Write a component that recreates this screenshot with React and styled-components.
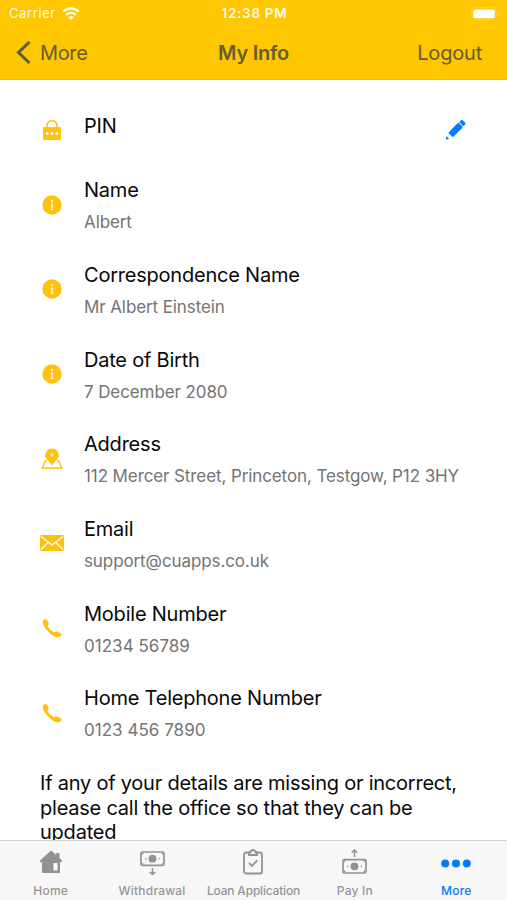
import React from "react";
import styled, { createGlobalStyle } from "styled-components";

const GlobalStyle = createGlobalStyle`
  * {
    box-sizing: border-box;
  }
  body {
    margin: 0;
    background: #fff;
    font-family: Inter, "Liberation Sans", sans-serif;
  }
`;

const Screen = styled.div`
  display: flex;
  flex-direction: column;
  width: 507px;
  height: 900px;
  overflow: hidden;
  background: #fff;
`;

const Header = styled.div`
  flex: none;
  height: 79.5px;
  background: #ffc602;
  border-bottom: 1px solid #e9b91c;
`;

const StatusBar = styled.div`
  display: grid;
  grid-template-columns: 1fr auto 1fr;
  align-items: center;
  height: 27px;
  padding: 0 7px 0 9px;
  color: #fffbe8;
  font-size: 13px;
  line-height: 27px;
`;

const Carrier = styled.div`
  display: flex;
  align-items: center;
  gap: 6px;
  letter-spacing: 0.6px;
`;

const Time = styled.div`
  font-size: 13.5px;
  font-weight: 600;
  letter-spacing: 0.7px;
`;

const BatteryHolder = styled.div`
  display: flex;
  justify-content: flex-end;
`;

const NavBar = styled.div`
  display: grid;
  grid-template-columns: 1fr auto 1fr;
  align-items: center;
  height: 51px;
  padding: 0 25px 0 16px;
  color: #655d30;
  font-size: 20px;
`;

const Back = styled.div`
  display: flex;
  align-items: center;
  gap: 9px;
  letter-spacing: -0.35px;
`;

const NavTitle = styled.div`
  padding-left: 9px;
  font-weight: 600;
  letter-spacing: -0.25px;
`;

const Logout = styled.div`
  text-align: right;
  letter-spacing: -0.2px;
`;

const Content = styled.div`
  flex: 1;
  min-height: 0;
  overflow: hidden;
  padding-top: 18.5px;
`;

const Row = styled.div`
  display: flex;
  align-items: center;
  height: ${(props) => (props.$short ? "64.8px" : "84.7px")};
  padding: 0 40px;
`;

const IconHolder = styled.div`
  display: flex;
  justify-content: center;
  width: 24px;
  margin-right: 20px;
  padding-bottom: 1px;
`;

const Texts = styled.div`
  flex: 1;
  display: flex;
  flex-direction: column;
  gap: 10px;
  padding-bottom: ${(props) => (props.$short ? "8px" : "0")};
  white-space: nowrap;
`;

const Title = styled.div`
  color: #080808;
  font-size: 20px;
  line-height: 24px;
  letter-spacing: -0.22px;
`;

const Value = styled.div`
  color: #747474;
  font-size: 17px;
  line-height: 20px;
  letter-spacing: ${(props) => props.$spacing ?? -0.1}px;
`;

const Note = styled.div`
  padding: 15.7px 40px 0;
  color: #080808;
  font-size: 20px;
  line-height: 24.5px;
  letter-spacing: -0.23px;
  white-space: nowrap;
`;

const TabBar = styled.div`
  flex: none;
  display: grid;
  grid-template-columns: repeat(5, 1fr);
  height: 60.5px;
  border-top: 1px solid #cfcfcf;
  background: #f7f7f7;
`;

const Tab = styled.div`
  display: flex;
  flex-direction: column;
  align-items: center;
  min-width: 0;
  padding-top: 8px;
  color: ${(props) => (props.$active ? "#057aff" : "#959595")};
  font-size: 12px;
  font-weight: 500;
  line-height: 16px;
  letter-spacing: ${(props) => props.$spacing ?? 0.2}px;
  white-space: nowrap;

  svg {
    margin-bottom: 8px;
  }
`;

const WifiIcon = () => (
  <svg width="18" height="14" viewBox="0 0 18 14" fill="none" stroke="#fffbe8">
    <path d="M1.2 4.700a11.2 11.2 0 0 1 15.6 0" strokeWidth="2.5" />
    <path d="M4 7.800a7.2 7.2 0 0 1 10 0" strokeWidth="2.3" />
    <path d="M9 13 6.2 10.200a4.1 4.1 0 0 1 5.6 0z" fill="#fffbe8" stroke="none" />
  </svg>
);

const BatteryIcon = () => (
  <svg width="29" height="14" viewBox="0 0 29 14">
    <rect x="0.8" y="0.8" width="24.4" height="12" rx="3.5" fill="none" stroke="#ffd54a" />
    <rect x="2.2" y="2.4" width="21.6" height="8.8" rx="1.8" fill="#fff" />
    <path d="M27 5v4c2-.8 2-3.2 0-4z" fill="#ffd54a" />
  </svg>
);

const BackIcon = () => (
  <svg width="15" height="24" viewBox="0 0 15 24" fill="none" stroke="#625b31" strokeWidth="3">
    <path d="M13.5 1 2.5 11.5l11 10.5" />
  </svg>
);

const LockIcon = () => (
  <svg width="20" height="22" viewBox="0 0 20 22">
    <path d="M5 9V6.5a5 5 0 0 1 10 0V9" fill="none" stroke="#ffc20e" strokeWidth="1.6" />
    <rect x="1" y="8" width="18" height="13" rx="1" fill="#ffc20e" />
    <g fill="#fff">
      <circle cx="5.2" cy="14.5" r="1.5" />
      <circle cx="10" cy="14.5" r="1.5" />
      <circle cx="14.8" cy="14.5" r="1.5" />
    </g>
  </svg>
);

const InfoIcon = () => (
  <svg width="20" height="20" viewBox="0 0 20 20">
    <circle cx="10" cy="10" r="9.7" fill="#ffc20e" />
    <g fill="#fff3c9">
      <circle cx="10" cy="6" r="1.2" />
      <path d="M8.5 8.6h2.400v5.300h.9v1H8.400v-1h.9V9.600h-.8z" />
    </g>
  </svg>
);

const AddressIcon = () => (
  <svg width="22" height="22" viewBox="0 0 22 22">
    <path d="M6 13H4.200L1.300 20h19.400L17.800 13H16" fill="none" stroke="#ffc20e" strokeWidth="1.5" />
    <path
      d="M11 17.5C9.500 14.5 4.300 11 4.300 7.200a6.700 6.700 0 0 1 13.400 0C17.700 11 12.500 14.500 11 17.500z"
      fill="#ffc20e"
    />
    <circle cx="11" cy="7" r="1.800" fill="#fff5d2" />
  </svg>
);

const MailIcon = () => (
  <svg width="24" height="16" viewBox="0 0 24 16">
    <rect width="24" height="16" rx="1.5" fill="#ffc20e" />
    <path
      d="M1 1.5 12 10 23 1.5M1 14.5 8 7.5M23 14.5 16 7.5"
      fill="none"
      stroke="#fff"
      strokeWidth="1.3"
    />
  </svg>
);

const PhoneIcon = () => (
  <svg width="20" height="20" viewBox="0 0 20 20">
    <path
      d="M1.200 2.200C2.500.6 4.200.4 5.100 2.100L6.500 4.700C7.200 6.100 6.400 6.900 5.300 7.700 7 10.400 9.100 12.600 12.300 14.500c.8-1 1.700-1.500 2.900-.9l3.300 1.500c1.500.7 1.300 2.200.1 3.200C16.600 20 13.200 19.200 10 16.900 5.400 13.600 1.700 8.700.9 5.100.7 4 .7 3 1.200 2.200z"
      fill="#ffc20e"
    />
  </svg>
);

const PencilIcon = () => (
  <svg width="22" height="22" viewBox="0 0 22 22" fill="#087cff">
    <rect x="3.4" y="7.6" width="14.400" height="6.600" rx="1.100" transform="rotate(-45 10.600 10.900)" />
    <rect x="15.600" y="0.900" width="4" height="6" rx="1.300" transform="rotate(-45 17.600 3.900)" />
    <path d="M.8 19.800 1.600 17.200 4.100 19.700 1.500 20.500Q.6 20.600.8 19.800z" />
  </svg>
);

const HomeIcon = () => (
  <svg width="24" height="26" viewBox="0 0 24 26">
    <path
      d="M12 1.5 17.200 6V4H20.500V9.200l2.700 2.500-1 1.500H21V23q0 1-1 1H4q-1 0-1-1v-9.800H1.600L.8 11.800z"
      fill="#929292"
    />
    <rect x="14.500" y="14" width="4" height="7.500" fill="#f7f7f7" />
  </svg>
);

const Banknote = ({ y }) => (
  <g transform={`translate(0 ${y})`}>
    <rect x="1" y="1" width="23" height="13.4" rx="1.5" fill="none" stroke="#929292" strokeWidth="1.7" />
    <circle cx="12.5" cy="7.7" r="3.9" fill="#929292" />
    <g fill="#929292">
      <circle cx="5.7" cy="7.7" r="0.8" />
      <circle cx="19.3" cy="7.7" r="0.8" />
      <path d="M2 2h2L2 4zM23 2h-2l2 2zM2 13.400v-2l2 2zM23 13.400v-2l-2 2z" />
    </g>
  </g>
);

const WithdrawalIcon = () => (
  <svg width="25" height="26" viewBox="0 0 25 26">
    <Banknote y={2} />
    <path d="M12.500 19v6.500M9.700 23l2.800 2.600 2.800-2.600" fill="none" stroke="#929292" strokeWidth="1.5" />
  </svg>
);

const PayInIcon = () => (
  <svg width="25" height="26" viewBox="0 0 25 26">
    <Banknote y={9.6} />
    <path d="M12.500 8V1M9.700 3.800l2.800-2.800 2.800 2.800" fill="none" stroke="#929292" strokeWidth="1.5" />
  </svg>
);

const LoanIcon = () => (
  <svg width="22" height="26" viewBox="0 0 22 26" fill="none" stroke="#929292" strokeWidth="1.8">
    <rect x="2" y="3.5" width="18" height="21" rx="2" />
    <path d="M7 6V3.500h1.500C8.800 1.800 9.700 1 11 1s2.200.8 2.500 2.500H15V6z" fill="#f7f7f7" />
    <path d="m7 14 3 3 5.200-5.600" />
  </svg>
);

const MoreIcon = () => (
  <svg width="30" height="26" viewBox="0 0 30 26" fill="#057aff">
    <circle cx="4.2" cy="14.4" r="4" />
    <circle cx="15" cy="14.4" r="4" />
    <circle cx="25.8" cy="14.4" r="4" />
  </svg>
);

const details = [
  { title: "Name", value: "Albert", Icon: InfoIcon },
  { title: "Correspondence Name", value: "Mr Albert Einstein", Icon: InfoIcon },
  { title: "Date of Birth", value: "7 December 2080", Icon: InfoIcon },
  {
    title: "Address",
    value: "112 Mercer Street, Princeton, Testgow, P12 3HY",
    Icon: AddressIcon,
  },
  { title: "Email", value: "support@cuapps.co.uk", Icon: MailIcon },
  { title: "Mobile Number", value: "01234 56789", Icon: PhoneIcon, spacing: 0.03 },
  { title: "Home Telephone Number", value: "0123 456 7890", Icon: PhoneIcon, spacing: 0.03 },
];

const tabs = [
  { label: "Home", Icon: HomeIcon },
  { label: "Withdrawal", Icon: WithdrawalIcon },
  { label: "Loan Application", Icon: LoanIcon, spacing: -0.2 },
  { label: "Pay In", Icon: PayInIcon },
  { label: "More", Icon: MoreIcon, active: true },
];

function App() {
  return (
    <Screen>
      <GlobalStyle />
      <Header>
        <StatusBar>
          <Carrier>
            Carrier
            <WifiIcon />
          </Carrier>
          <Time>12:38 PM</Time>
          <BatteryHolder>
            <BatteryIcon />
          </BatteryHolder>
        </StatusBar>
        <NavBar>
          <Back>
            <BackIcon />
            More
          </Back>
          <NavTitle>My Info</NavTitle>
          <Logout>Logout</Logout>
        </NavBar>
      </Header>
      <Content>
        <Row $short>
          <IconHolder>
            <LockIcon />
          </IconHolder>
          <Texts $short>
            <Title>PIN</Title>
          </Texts>
          <PencilIcon />
        </Row>
        {details.map(({ title, value, Icon, spacing }) => (
          <Row key={title}>
            <IconHolder>
              <Icon />
            </IconHolder>
            <Texts>
              <Title>{title}</Title>
              <Value $spacing={spacing}>{value}</Value>
            </Texts>
          </Row>
        ))}
        <Note>
          If any of your details are missing or incorrect,
          <br />
          please call the office so that they can be
          <br />
          updated
        </Note>
      </Content>
      <TabBar>
        {tabs.map(({ label, Icon, active, spacing }) => (
          <Tab key={label} $active={active} $spacing={spacing}>
            <Icon />
            {label}
          </Tab>
        ))}
      </TabBar>
    </Screen>
  );
}

export default App;
